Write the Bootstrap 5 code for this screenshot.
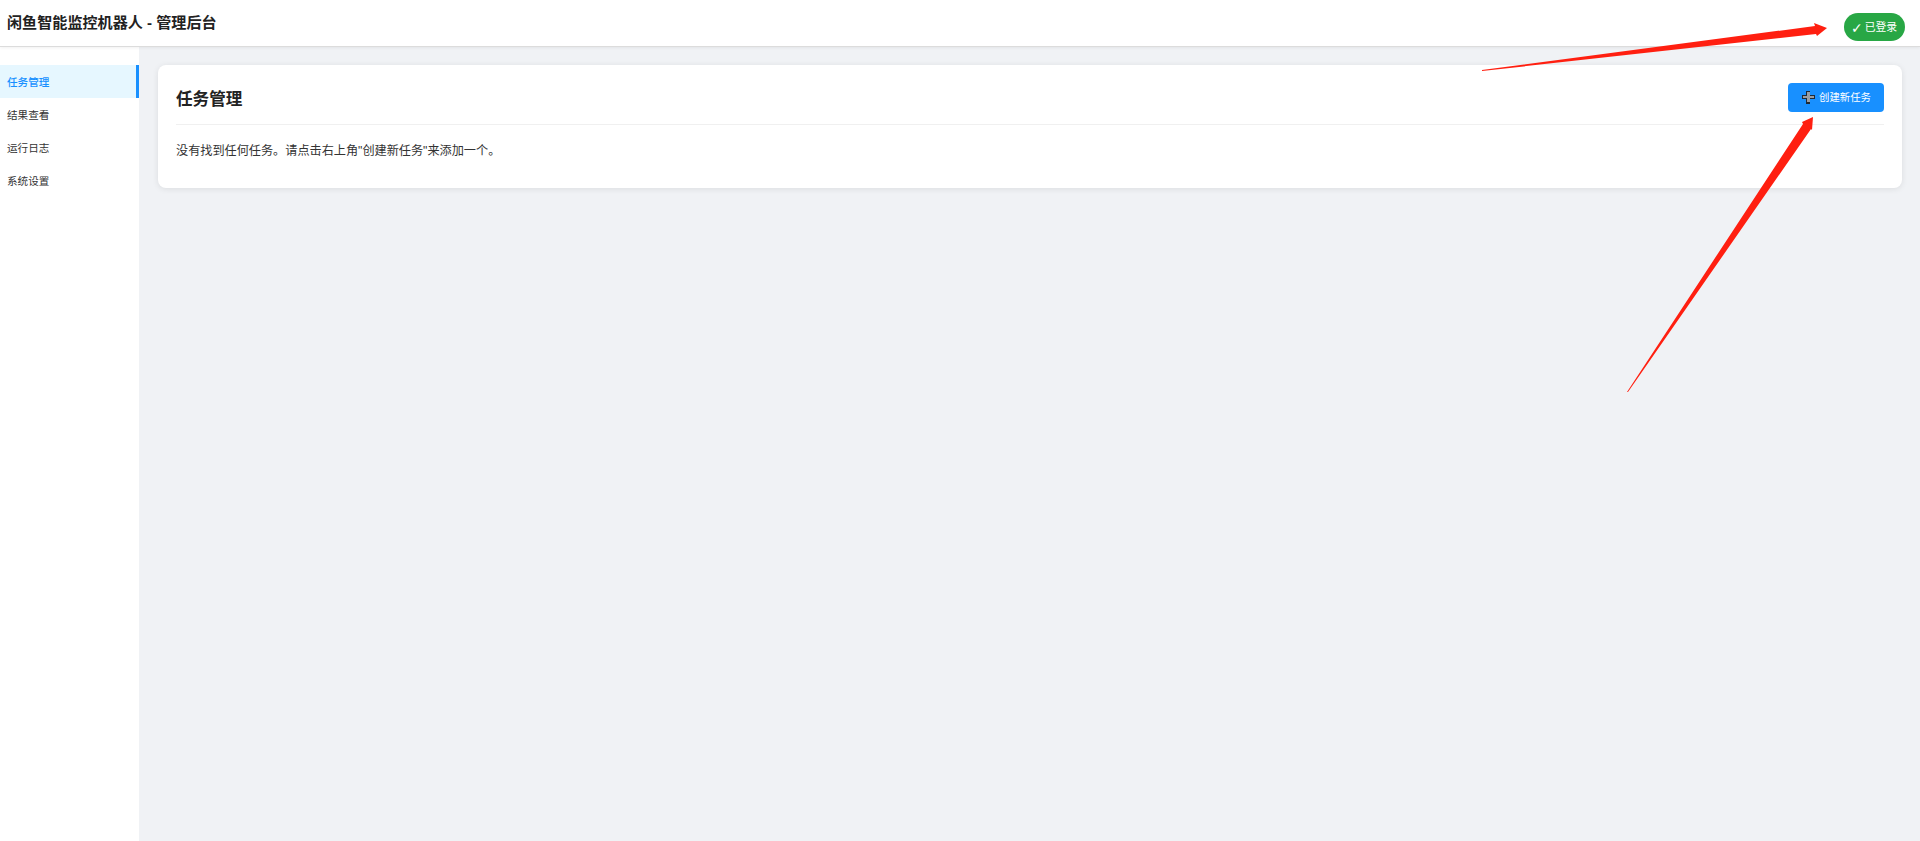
<!DOCTYPE html>
<html lang="zh-CN">
<head>
<meta charset="utf-8" />
<meta name="viewport" content="width=device-width,initial-scale=1" />
<title>闲鱼智能监控机器人 - 管理后台</title>
<link href="https://cdn.jsdelivr.net/npm/bootstrap@5.3.3/dist/css/bootstrap.min.css" rel="stylesheet" />
<style>
  body { background:#f0f2f5; color:#333; font-family:"Liberation Sans","Noto Sans CJK SC",sans-serif; height:841px; overflow:hidden; }
  .top-bar { height:47px; padding:1px 15px 0 7px; border-bottom:1px solid #dcdcdc; box-shadow:0 1px 3px rgba(0,0,0,.06); }
  .app-title { font-size:15.1px; font-weight:700; color:#222; }
  .login-pill { height:28px; width:61px; margin-top:7px; padding:0 1px 0 0; gap:2px; background:#28a745; color:#fff; font-size:10.8px; font-weight:400; }
  .login-pill .tick { font-family:"DejaVu Sans",sans-serif; font-size:14px; line-height:1; margin-top:1px; }
  .page-body { height:794px; }
  .side-menu { width:139px; padding-top:18px; }
  .side-link { height:33px; padding:3px 0 0 7px; font-size:10.6px; color:#333; border-right:3px solid transparent; text-decoration:none; }
  .side-link.current { background:#e6f7ff; color:#1890ff; border-right-color:#1890ff; font-weight:500; }
  .main-pane { padding:18px 18px 0 19px; }
  .task-card { border:0; border-radius:8px; padding:18px 18px 28px; box-shadow:0 1px 6px rgba(0,0,0,.09); }
  .task-head { padding:0 0 12px; border-bottom:1px solid #f0f0f0; margin-bottom:18px; }
  .task-title { font-size:16.6px; font-weight:700; color:#222; margin:5px 0 0; }
  .new-btn { width:96px; height:29px; padding:0 0 0 1px; font-size:10.4px; background:#1890ff; border:0; border-radius:4px; color:#fff; }
  .empty-msg { font-size:12.15px; line-height:17px; color:#333; margin:0; }
  .arrows { position:absolute; left:0; top:0; pointer-events:none; }
</style>
</head>
<body>

<header class="top-bar navbar bg-white flex-nowrap">
  <span class="app-title">闲鱼智能监控机器人 - 管理后台</span>
  <span class="login-pill badge rounded-pill d-flex align-items-center justify-content-center"><span class="tick">✓</span>已登录</span>
</header>

<div class="page-body d-flex">
  <nav class="side-menu bg-white d-flex flex-column flex-shrink-0">
    <a class="side-link current d-flex align-items-center" href="#">任务管理</a>
    <a class="side-link d-flex align-items-center" href="#">结果查看</a>
    <a class="side-link d-flex align-items-center" href="#">运行日志</a>
    <a class="side-link d-flex align-items-center" href="#">系统设置</a>
  </nav>

  <main class="main-pane flex-grow-1">
    <div class="task-card card">
      <div class="task-head d-flex justify-content-between align-items-center">
        <h2 class="task-title">任务管理</h2>
        <button class="new-btn btn d-flex align-items-center justify-content-center gap-1" type="button">
          <svg width="13" height="13" viewBox="0 0 13 13" aria-hidden="true">
            <path d="M4 0h4v4h5v4H8v5H4V8H0V4h4z" fill="#1f2a36" />
            <path d="M5 1h3v4h4v2H8v4H5V7H1V5h4z" fill="#9a9ea3" />
          </svg>
          创建新任务
        </button>
      </div>
      <p class="empty-msg">没有找到任何任务。请点击右上角"创建新任务"来添加一个。</p>
    </div>
  </main>
</div>

<!-- red annotation arrows drawn over the page -->
<svg class="arrows" width="1920" height="841" viewBox="0 0 1920 841" aria-hidden="true">
  <path d="M1482 70 L1482 71 L1816 34 L1817 36 L1827 28 L1814 23 L1815 26 Z" fill="#ff1f10" />
  <path d="M1627 392 L1628 392 L1811 129 L1812 130 L1813 117 L1802 122 L1803 124 Z" fill="#ff1f10" />
</svg>

<script src="https://cdn.jsdelivr.net/npm/bootstrap@5.3.3/dist/js/bootstrap.bundle.min.js"></script>
</body>
</html>
